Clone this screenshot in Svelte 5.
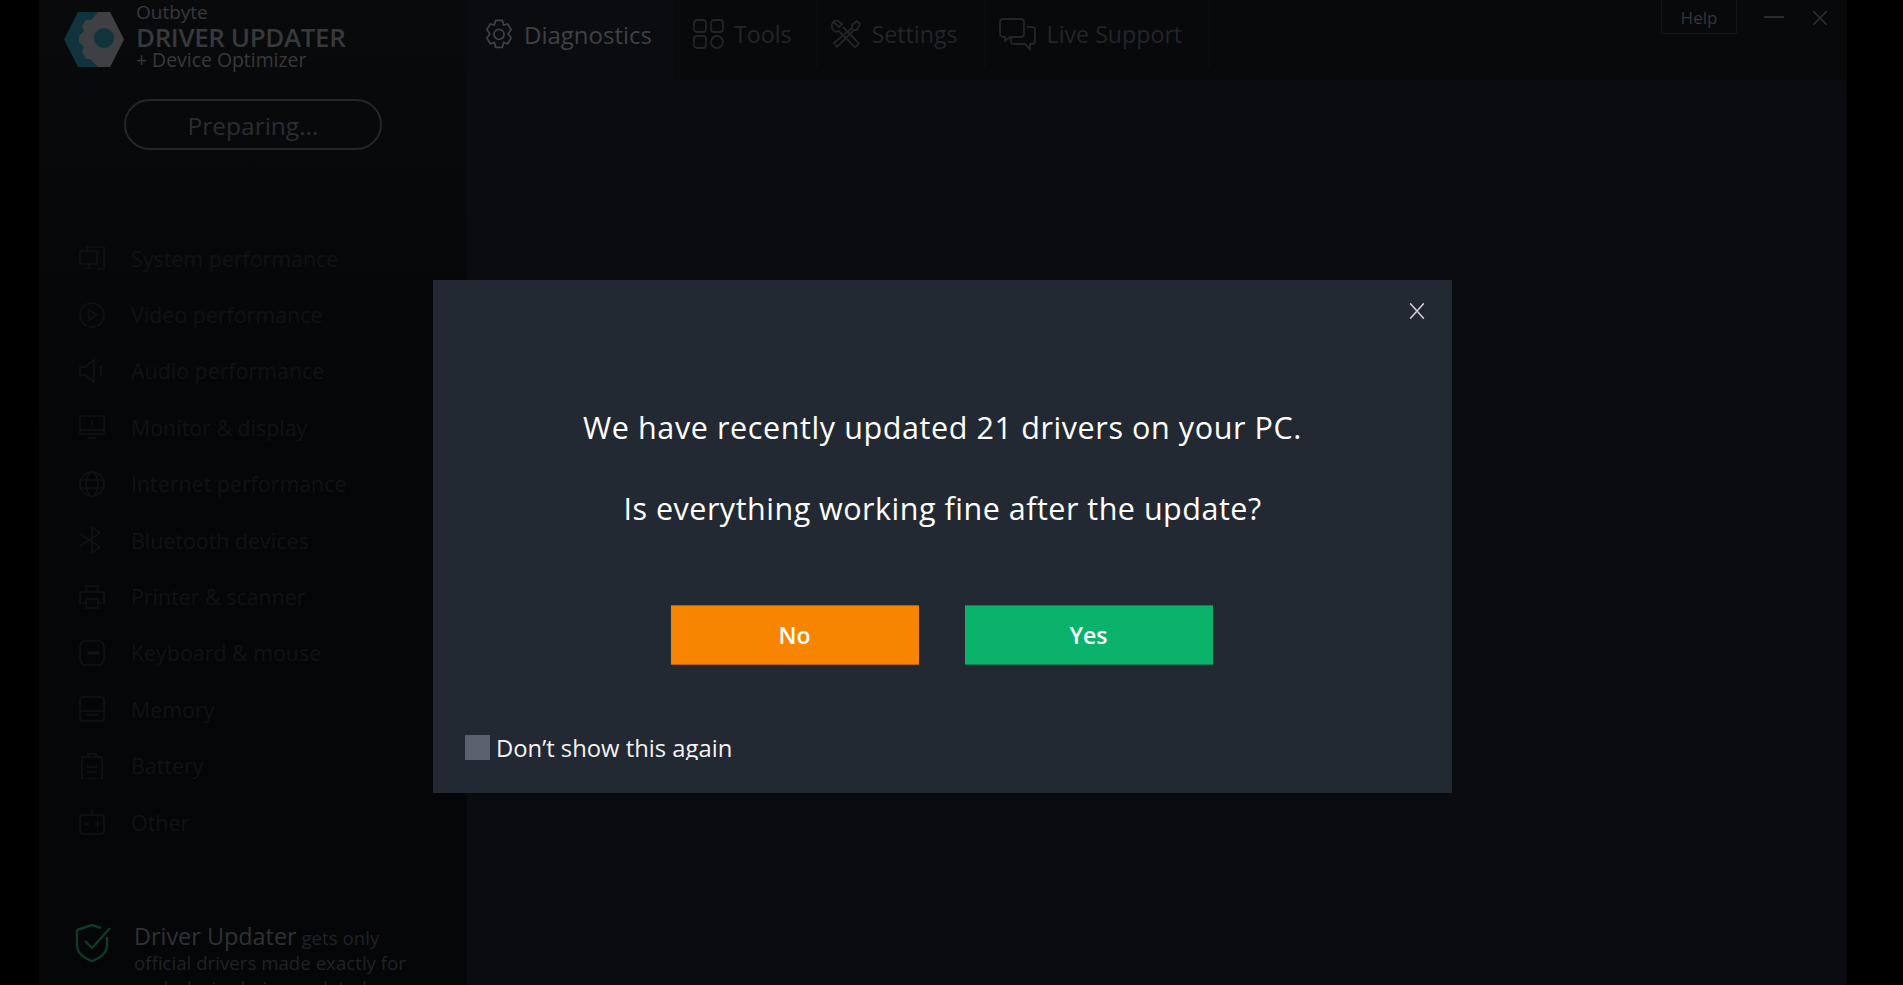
<script lang="ts">
  const menu = [
    { label: 'System performance', icon: 'system' },
    { label: 'Video performance', icon: 'video' },
    { label: 'Audio performance', icon: 'audio' },
    { label: 'Monitor & display', icon: 'monitor' },
    { label: 'Internet performance', icon: 'internet' },
    { label: 'Bluetooth devices', icon: 'bluetooth' },
    { label: 'Printer & scanner', icon: 'printer' },
    { label: 'Keyboard & mouse', icon: 'keyboard' },
    { label: 'Memory', icon: 'memory' },
    { label: 'Battery', icon: 'battery' },
    { label: 'Other', icon: 'other' }
  ];
</script>

<div class="page">
  <div class="app">
    <aside class="sidebar">
      <div class="brand">
        <svg class="logo" viewBox="0 0 60 55">
          <path d="M14 0h32l14 27.500L46 55H14L0 27.500z" fill="#10333e" />
          <path d="M34 0h12l14 27.500L46 55H34l-8-8h-4l-4-7 2-5-5-5v-6l5-5-2-5 4-6h5z" fill="#3e4043" />
          <circle cx="40" cy="26" r="10" fill="#10333e" />
        </svg>
        <div class="brand-text">
          <div class="brand-small">Outbyte</div>
          <div class="brand-main">DRIVER UPDATER</div>
          <div class="brand-sub">+ Device Optimizer</div>
        </div>
      </div>

      <div class="preparing">Preparing...</div>

      <ul class="menu">
        {#each menu as item}
          <li>
            <svg class="menu-icon" viewBox="0 0 26 26" fill="none" stroke="currentColor" stroke-width="1.6">
              {#if item.icon === 'system'}
                <path d="M8 6V2h17v22h-7M1 6h17v13H1zM6 23h8M10 19v4" />
              {:else if item.icon === 'video'}
                <circle cx="13" cy="13" r="12" /><path d="M10 8l8 5-8 5z" />
              {:else if item.icon === 'audio'}
                <path d="M1 9h5l9-7v22l-9-7H1zM22 8v10" />
              {:else if item.icon === 'monitor'}
                <path d="M1 2h24v18H1zM1 16h24M9 24h8M13 6v5" />
              {:else if item.icon === 'internet'}
                <circle cx="13" cy="13" r="12" /><ellipse cx="13" cy="13" rx="6" ry="12" /><path d="M1 9h24M1 17h24" />
              {:else if item.icon === 'bluetooth'}
                <path d="M1 7l20 13-8 6V0l8 6L1 19" />
              {:else if item.icon === 'printer'}
                <path d="M7 8V2h12v6M7 19H1V8h24v11h-6M7 15h12v9H7z" />
              {:else if item.icon === 'keyboard'}
                <rect x="1" y="1" width="24" height="24" rx="6" /><path d="M9 13h11" stroke-width="3" />
              {:else if item.icon === 'memory'}
                <rect x="1" y="1" width="24" height="24" rx="3" /><path d="M1 15h24M7 19h12" />
              {:else if item.icon === 'battery'}
                <path d="M3 4h20v22H3zM9 4V1h8v3M8 14h10M8 19h10" />
              {:else}
                <rect x="1" y="6" width="24" height="19" rx="3" /><path d="M13 0v6M6 15h4M16 15h5M18.500 12v6" />
              {/if}
            </svg>
            <span>{item.label}</span>
          </li>
        {/each}
      </ul>

      <div class="note">
        <svg class="shield" viewBox="0 0 37 38" fill="none" stroke="#0f3a26" stroke-width="2.400">
          <path d="M2 6l15-5 9 3M32 13v8c0 8-7 13-15 16C9 34 2 29 2 21V6" />
          <path d="M10 17l7 7L35 4" />
        </svg>
        <p><strong>Driver Updater</strong> gets only official drivers made exactly for each device being updated</p>
      </div>
    </aside>

    <main class="main">
      <header class="topbar">
        <nav class="tabs">
          <div class="tab active">
            <svg class="gear" viewBox="3.500 3 21 22.500" fill="none" stroke="currentColor" stroke-width="1.300">
              <path d="M11.500 1.500h5l1 3.500 3-.8 2.600 4.300-2.300 3.100 2.300 3.100-2.600 4.300-3-.8-1 3.500h-5l-1-3.500-3 .8-2.600-4.300 2.300-3.100-2.300-3.100 2.600-4.300 3 .8z" transform="translate(0 2.500)" />
              <circle cx="14" cy="14.500" r="3.800" />
            </svg>
            <span>Diagnostics</span>
          </div>
          <div class="tab">
            <svg class="grid" viewBox="0 0 31 30" fill="none" stroke="currentColor" stroke-width="1.800">
              <rect x="1" y="1" width="12" height="12" rx="3" /><rect x="18" y="1" width="12" height="12" rx="3" />
              <rect x="1" y="17" width="12" height="12" rx="3" /><circle cx="24" cy="23" r="6" />
            </svg>
            <span>Tools</span>
          </div>
          <div class="tab">
            <svg class="tools" viewBox="0 0 30 29" fill="none" stroke="currentColor" stroke-width="1.800">
              <path d="M3 2.500l5 4.500 3-3-4.500-3.500C2 0-.5 5 1.500 9 3 11.500 6 12 8 11l16 16.500 4-4L12 7" />
              <path d="M29 4l-3-3-5 4v3L3 23l3 4 17-17h3z" />
            </svg>
            <span>Settings</span>
          </div>
          <div class="tab">
            <svg class="chat" viewBox="0 0 37 33" fill="none" stroke="currentColor" stroke-width="1.800">
              <path d="M4 1h18a3 3 0 0 1 3 3v12a3 3 0 0 1-3 3H11l-5 4v-4H4a3 3 0 0 1-3-3V4a3 3 0 0 1 3-3z" />
              <path d="M28 9h5a3 3 0 0 1 3 3v11a3 3 0 0 1-3 3h-2v5l-5-5H15a3 3 0 0 1-3-3v-4" />
            </svg>
            <span>Live Support</span>
          </div>
        </nav>
        <div class="window-controls">
          <span class="help">Help</span>
          <span class="min"></span>
          <svg class="close" viewBox="0 0 14 14" fill="none" stroke="currentColor" stroke-width="1.300"><path d="M1 1l12 12M13 1L1 13" /></svg>
        </div>
      </header>
    </main>
  </div>

  <div class="modal">
    <button class="modal-close" aria-label="Close">
      <svg viewBox="0 0 14 14" preserveAspectRatio="none" fill="none" stroke="#c9cbcf" stroke-width="1.300"><path d="M1 1l12 12M13 1L1 13" /></svg>
    </button>
    <p class="line first">We have recently updated 21 drivers on your PC.</p>
    <p class="line second">Is everything working fine after the update?</p>
    <div class="actions">
      <button class="btn no">No</button>
      <button class="btn yes">Yes</button>
    </div>
    <label class="again">
      <span class="check"></span>
      <span class="again-text">Don’t show this again</span>
    </label>
  </div>
</div>

<style>
  :global(body) {
    margin: 0;
    background: #000;
  }

  .page {
    position: relative;
    height: 985px;
    overflow: hidden;
    background: #000;
    font-family: "Open Sans", "Noto Sans", sans-serif;
    padding: 0 56px 0 39px;
    box-sizing: border-box;
  }

  .app {
    display: flex;
    height: 100%;
    background: #0b0c0f;
  }

  .sidebar {
    width: 428px;
    flex-shrink: 0;
    background: linear-gradient(#090a0c, #050608 45%);
    display: flex;
    flex-direction: column;
    overflow: hidden;
  }

  .sidebar > * {
    flex-shrink: 0;
  }

  .brand {
    display: flex;
    gap: 12px;
    padding: 12px 0 0 25px;
    height: 88px;
    box-sizing: border-box;
  }

  .logo {
    width: 60px;
    height: 55px;
    flex-shrink: 0;
  }

  .brand-text {
    margin-top: -9px;
    color: #37393c;
    white-space: nowrap;
  }

  .brand-small {
    font-size: 19px;
    line-height: 19px;
  }

  .brand-main {
    font-size: 26px;
    line-height: 30px;
    font-weight: 600;
    letter-spacing: -0.4px;
  }

  .brand-sub {
    margin-top: -2px;
    font-size: 19.4px;
    line-height: 20px;
  }

  .preparing {
    width: 258px;
    height: 51px;
    margin: 11px 0 0 85px;
    box-sizing: border-box;
    border: 2px solid #23262a;
    border-radius: 26px;
    color: #2a2d32;
    font-size: 24.5px;
    line-height: 49px;
    text-align: center;
  }

  .menu {
    list-style: none;
    margin: 80px 0 0;
    padding: 0;
  }

  .menu li {
    display: flex;
    align-items: center;
    height: 56.4px;
    padding-left: 40px;
    color: #111316;
    font-size: 21.4px;
  }

  .menu-icon {
    width: 26px;
    height: 26px;
    margin-right: 26px;
    flex-shrink: 0;
  }

  .note {
    display: flex;
    gap: 22px;
    margin-top: 49px;
    padding: 25px 40px 0 36px;
  }

  .shield {
    width: 37px;
    height: 38px;
    flex-shrink: 0;
  }

  .note p {
    margin: 0;
    font-size: 18.7px;
    line-height: 25px;
    color: #202226;
  }

  .note strong {
    font-weight: 400;
    font-size: 23.4px;
    color: #303236;
  }

  .main {
    flex: 1;
    min-width: 0;
  }

  .topbar {
    display: flex;
    justify-content: space-between;
    height: 80px;
    background: #08090b;
  }

  .tabs {
    display: flex;
  }

  .tab {
    display: flex;
    align-items: center;
    gap: 11px;
    height: 68px;
    padding: 0 26px 0 14px;
    border-right: 1px solid #0d0e11;
    color: #23252a;
    font-size: 23.2px;
  }

  .tab:nth-child(2) {
    gap: 10px;
    padding: 0 24px 0 13px;
  }

  .gear {
    width: 28px;
    height: 30px;
  }

  .grid {
    width: 31px;
    height: 30px;
  }

  .tools {
    width: 30px;
    height: 29px;
  }

  .chat {
    width: 37px;
    height: 33px;
  }

  .tab.active {
    height: 80px;
    padding: 0 27px 12px 18px;
    box-sizing: border-box;
    background: #0b0c0f;
    color: #3f4144;
    font-size: 24px;
  }

  .window-controls {
    display: flex;
    align-items: flex-start;
    padding-right: 19px;
    color: #2a2c30;
  }

  .help {
    display: block;
    width: 76px;
    height: 34px;
    box-sizing: border-box;
    border: 1px solid #14161a;
    border-top: 0;
    text-align: center;
    font-size: 17px;
    line-height: 35px;
    color: #34363a;
  }

  .min {
    width: 20px;
    height: 2px;
    margin: 16px 0 0 27px;
    background: currentColor;
  }

  .close {
    width: 16px;
    height: 16px;
    margin: 10px 0 0 28px;
  }

  .modal {
    position: absolute;
    left: 433px;
    top: 280px;
    width: 1019px;
    height: 513px;
    background: #232933;
    color: #fff;
    text-align: center;
  }

  .modal-close {
    position: absolute;
    top: 22px;
    right: 27px;
    width: 16px;
    height: 18px;
    padding: 0;
    border: 0;
    background: none;
  }

  .modal-close svg {
    display: block;
    width: 16px;
    height: 18px;
  }

  .line {
    margin: 0;
    font-size: 30.5px;
    line-height: 44px;
    letter-spacing: 0.6px;
  }

  .first {
    padding-top: 125px;
  }

  .second {
    padding-top: 37px;
    letter-spacing: 0.5px;
  }

  .actions {
    display: flex;
    justify-content: center;
    gap: 46px;
    margin-top: 75px;
    padding-right: 2px;
  }

  .btn {
    width: 248px;
    height: 60px;
    border: 0;
    border-top: 1px solid rgba(0, 0, 0, 0.25);
    border-bottom: 1px solid rgba(0, 0, 0, 0.25);
    color: #fff;
    font-family: inherit;
    font-size: 23px;
    font-weight: 600;
  }

  .no {
    background: #f78500;
  }

  .yes {
    background: #0ab26c;
  }

  .again {
    position: absolute;
    left: 32px;
    bottom: 33px;
    display: flex;
    align-items: flex-start;
    gap: 6px;
    font-size: 23.8px;
    color: #f2f3f4;
  }

  .check {
    width: 25px;
    height: 25px;
    margin-top: 3px;
    background: #5b606d;
  }

  .again-text {
    display: block;
    height: 28px;
    line-height: 32px;
    overflow: hidden;
  }
</style>
